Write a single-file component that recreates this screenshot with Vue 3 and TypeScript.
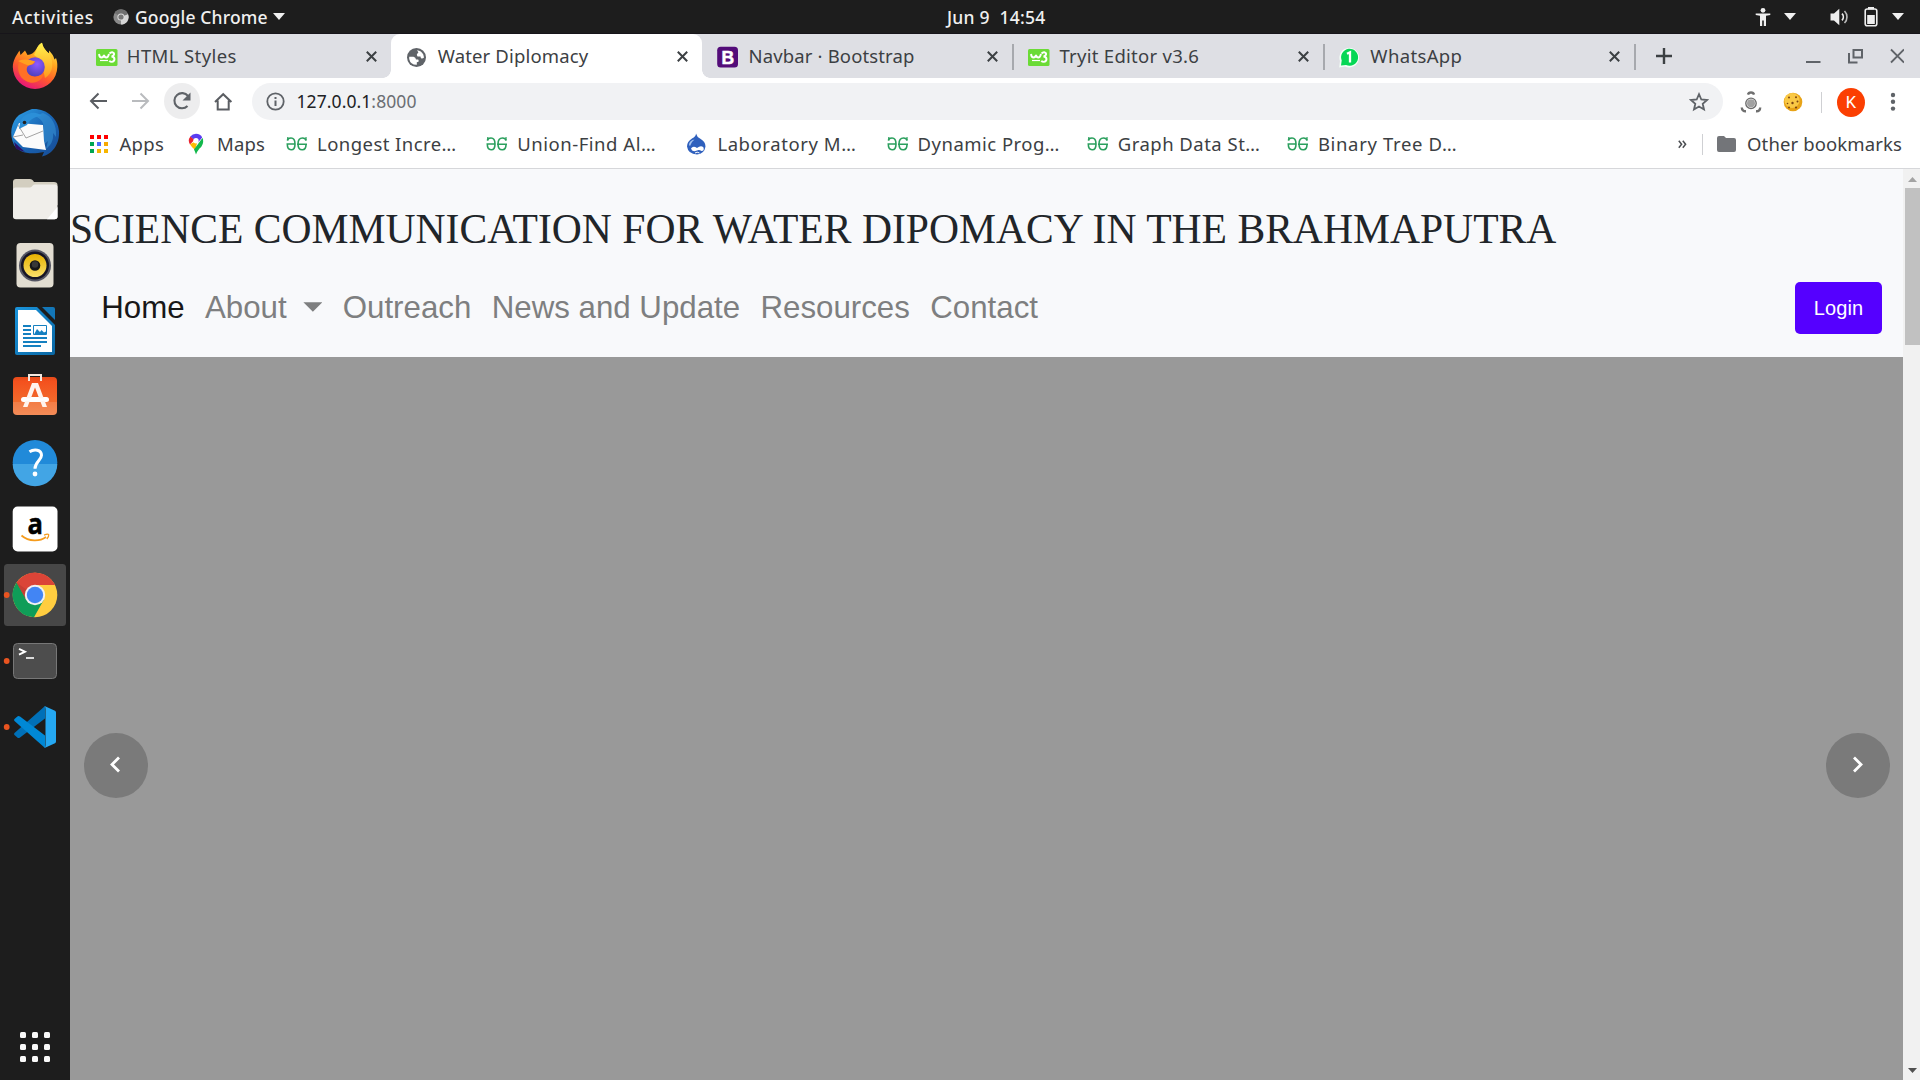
<script setup lang="ts">
interface Tab {
  title: string
  icon: 'w3' | 'globe' | 'bootstrap' | 'whatsapp'
  tracking: number
  active?: boolean
  divider?: boolean
}

interface Bookmark {
  label: string
  icon: 'gfg' | 'drupal'
  tracking: number
}

const tabs: Tab[] = [
  { title: 'HTML Styles', icon: 'w3', tracking: 0.4 },
  { title: 'Water Diplomacy', icon: 'globe', tracking: 0.15, active: true },
  { title: 'Navbar · Bootstrap', icon: 'bootstrap', tracking: 0.14, divider: true },
  { title: 'Tryit Editor v3.6', icon: 'w3', tracking: 0.28, divider: true },
  { title: 'WhatsApp', icon: 'whatsapp', tracking: 0.35, divider: true },
]

const bookmarks: Bookmark[] = [
  { label: 'Longest Incre…', icon: 'gfg', tracking: 0.45 },
  { label: 'Union-Find Al…', icon: 'gfg', tracking: 0.53 },
  { label: 'Laboratory M…', icon: 'drupal', tracking: 0.58 },
  { label: 'Dynamic Prog…', icon: 'gfg', tracking: 0.48 },
  { label: 'Graph Data St…', icon: 'gfg', tracking: 0.48 },
  { label: 'Binary Tree D…', icon: 'gfg', tracking: 0.65 },
]

const appColors: string[] = [
  '#f00', '#f00', '#f00',
  '#00a651', '#4b6bfb', '#f7a800',
  '#00a651', '#f7b500', '#f7b500',
]
</script>

<template>
  <div class="desktop">
    <header class="topbar">
      <span class="activities">Activities</span>
      <svg class="mini-chrome" width="16" height="16" viewBox="0 0 16 16">
        <circle cx="8" cy="8" r="7.6" fill="#8a8a8a" />
        <path d="M8 8 15 5A7.6 7.6 0 0 1 8 15.6z" fill="#d6d6d6" />
        <path d="M8 8 1.5 4A7.6 7.6 0 0 1 15 5z" fill="#707070" />
        <circle cx="8" cy="8" r="3.6" fill="#ddd" />
        <circle cx="8" cy="8" r="2.6" fill="#777" />
      </svg>
      <span class="app-name">Google Chrome</span>
      <i class="tri app-tri"></i>
      <span class="clock">Jun 9&nbsp; 14:54</span>
      <div class="status">
        <svg width="16" height="20" viewBox="0 0 16 20" fill="#f0f0f0">
          <circle cx="8" cy="3.3" r="2.4" />
          <path d="M.7 6.5h14.6v1.6l-4.3.7V19H8.8v-5.6H7.2V19H5V8.800L.7 8.100z" />
        </svg>
        <i class="tri t1"></i>
        <svg class="vol" width="20" height="18" viewBox="0 0 20 18">
          <path d="M.5 5.500H4L9.300.8v16.400L4 12.500H.5z" fill="#f0f0f0" />
          <path d="M12 5.700a4.800 4.800 0 0 1 0 6.600" fill="none" stroke="#eee" stroke-width="1.700" />
          <path d="M14.500 3a8.500 8.500 0 0 1 0 12" fill="none" stroke="#bbb" stroke-width="1.600" />
        </svg>
        <svg class="bat" width="14" height="20" viewBox="0 0 14 20">
          <rect x="4" y="0" width="6" height="2.500" fill="#eee" />
          <rect x="1.200" y="2" width="11.600" height="16.800" rx="2" fill="none" stroke="#eee" stroke-width="1.600" />
          <rect x="3.200" y="8" width="7.600" height="9" fill="#eee" />
        </svg>
        <i class="tri t2"></i>
      </div>
    </header>

    <div class="workspace">
      <aside class="dock">
        <!-- Firefox -->
        <svg class="slot" viewBox="0 0 70 66">
          <defs>
            <linearGradient id="ffx" x1=".8" y1="0" x2=".3" y2="1">
              <stop offset="0" stop-color="#fff44f" />
              <stop offset=".35" stop-color="#ffa41f" />
              <stop offset=".65" stop-color="#ff5b2c" />
              <stop offset="1" stop-color="#e5117e" />
            </linearGradient>
            <linearGradient id="ffy" x1=".5" y1="0" x2=".5" y2="1">
              <stop offset="0" stop-color="#fff34d" />
              <stop offset="1" stop-color="#ff9a1d" />
            </linearGradient>
            <radialGradient id="ffp" cx=".6" cy=".35" r=".7">
              <stop offset="0" stop-color="#9059ff" />
              <stop offset="1" stop-color="#4a3fb8" />
            </radialGradient>
          </defs>
          <path d="M35 56A22.300 22.300 0 0 1 12.800 34C13 27 16 23 19.500 17.500L20.500 22 25 17.500 27.500 22C31 21.500 34 20 36 16.500 38 13 39 11.500 42 9.800 43 15 46 18 49 20.500V17.500C52.500 21 53.500 23 54.500 26.500L56 25C57 28 57.500 30 57.300 34A22.300 22.300 0 0 1 35 56z" fill="url(#ffx)" />
          <path d="M36 18C38 13 39 11.500 42 9.800 43 15 46 18 49 20.500 54 28 54 40 45 45L41 27 34 22z" fill="url(#ffy)" />
          <circle cx="35" cy="34" r="9.800" fill="url(#ffp)" />
          <path d="M19 29C24 27 29 28 35 28.500 34 31.500 31 32 28.500 32.500 25.500 35 26.500 40 30.500 42.500 35 45 40 43 44 40 42 49 33 52 26 48 18 44 17 35 19 29z" fill="#ff7026" />
          <path d="M18 28Q26 25 35 28.500 33 31.500 28.500 32.500 24 31 18 28z" fill="#ffa01f" />
        </svg>
        <!-- Thunderbird -->
        <svg class="slot" viewBox="0 0 70 66">
          <defs>
            <linearGradient id="tb" x1="0" y1="0" x2="1" y2="1">
              <stop offset="0" stop-color="#2fa3e8" />
              <stop offset=".5" stop-color="#1965b5" />
              <stop offset="1" stop-color="#174a92" />
            </linearGradient>
          </defs>
          <path d="M14 46C9 35 11 23 19 16L27 12 32 10C46 9 58 19 59 32 60 46 51 56 42 57.500L44 53C30 56 19 54 14 46z" fill="url(#tb)" />
          <path d="M14 43 25 53 16 50z" fill="#2c0f65" />
          <path d="M43 14C52 17 57 26 56 38L53 34C54 42 50 47 46 50L48 42C45 45 42 47 38 48L43 32C45 25 42 20 35 17z" fill="#3c9bdc" opacity=".5" />
          <path d="M19 24 43 26 44 42 46 51 23 48 13 38z" fill="#fbfbfb" />
          <path d="M18 26 26 39 43 32M13 38 23 36" fill="none" stroke="#999" stroke-width=".9" />
          <path d="M23 18C30 12 38 13 42 17 36 17 30 20 27 26L19 30C20 25 20 22 23 18z" fill="#2b8fd8" />
          <circle cx="24.500" cy="23.500" r="1.800" fill="#222" />
        </svg>
        <!-- Files -->
        <svg class="slot" viewBox="0 0 70 66">
          <path d="M13 17q0-3 3-3h14q2 0 3 1.500l1 1.500h20q3.500 0 3.500 3v20H13z" fill="#d3cec0" />
          <path d="M13 25q0-2.500 2.500-2.500H30q1.500 0 2.500-1.700 1-1.300 2.500-1.300H55q2.500 0 2.500 2.500V51.500q0 2.700-3 2.700H16q-3 0-3-2.700z" fill="#f0eeea" />
          <path d="M57.500 42v9.500q0 2.700-3 2.700H47z" fill="#fff" />
        </svg>
        <!-- Rhythmbox -->
        <svg class="slot" viewBox="0 0 70 66">
          <defs>
            <linearGradient id="rb" x1="0" y1="0" x2="0" y2="1">
              <stop offset="0" stop-color="#e6b000" />
              <stop offset="1" stop-color="#fbe06a" />
            </linearGradient>
          </defs>
          <rect x="16.500" y="12" width="37" height="44.500" rx="4" fill="#e2ddd1" />
          <circle cx="35" cy="34.500" r="16" fill="#555663" />
          <circle cx="35" cy="34.500" r="14" fill="#171525" />
          <circle cx="35" cy="34.500" r="11.500" fill="url(#rb)" />
          <circle cx="35" cy="34.500" r="5.300" fill="#171717" />
          <circle cx="35" cy="33.500" r="3.200" fill="#383838" />
        </svg>
        <!-- Writer -->
        <svg class="slot" viewBox="0 0 70 66">
          <defs>
            <linearGradient id="wr" x1="0" y1="0" x2="1" y2="1">
              <stop offset="0" stop-color="#1a94dc" />
              <stop offset="1" stop-color="#0a67a3" />
            </linearGradient>
          </defs>
          <path d="M15 12q0-2 2-2H37L55 28V56q0 2-2 2H17q-2 0-2-2z" fill="url(#wr)" />
          <path d="M18 13H36L52 29V55H18z" fill="#fff" />
          <path d="M42 10H53q2 0 2 2V23z" fill="#1377b8" />
          <path d="M23 29h8M23 33h8M23 37h8M23 41h24M23 45h24M23 49h18" stroke="#1580c0" stroke-width="2" />
          <path d="M33.500 28.500h13v9h-13z" fill="#fff" stroke="#1580c0" />
          <path d="M34 37.500 37 32l3 3 1.500-2 2.500 2.500 2-1v3z" fill="#1580c0" />
        </svg>
        <!-- Software -->
        <svg class="slot" viewBox="0 0 70 66">
          <defs>
            <linearGradient id="sw" x1="0" y1="0" x2="0" y2="1">
              <stop offset="0" stop-color="#e64a19" />
              <stop offset=".12" stop-color="#f4511e" />
              <stop offset=".65" stop-color="#f26a2c" />
              <stop offset=".66" stop-color="#f37d46" />
              <stop offset="1" stop-color="#f38c58" />
            </linearGradient>
          </defs>
          <rect x="13" y="14" width="44" height="38" rx="4" fill="url(#sw)" />
          <path d="M29 18V12H41V18" fill="none" stroke="#f6e9df" stroke-width="2" />
          <path d="M23.500 36.500H46.500" stroke="#fff" stroke-width="5" stroke-linecap="round" />
          <path d="M32 20H38L47 44H42.500L35 24.500 27.500 44H23z" fill="#fff4ee" />
          <path d="M24 36.500H46" stroke="#fff" stroke-width="2.500" />
        </svg>
        <!-- Help -->
        <svg class="slot" viewBox="0 0 70 66">
          <circle cx="35" cy="33.300" r="22.300" fill="#218ad9" />
          <path d="M12.700 35H57.300A22.300 22.300 0 0 1 12.700 35z" fill="#42a5e5" />
          <path d="M29.500 22.800C34 19.800 41.500 20.300 41.500 26.300 41.500 31.300 35 32.800 35 39.800" fill="none" stroke="#fff" stroke-width="3" />
          <circle cx="35" cy="45" r="2.400" fill="#fff" />
        </svg>
        <!-- Amazon -->
        <svg class="slot" viewBox="0 0 70 66">
          <rect x="12.700" y="11.500" width="44.800" height="45" rx="5" fill="#fff" />
          <text x="35.300" y="39.300" text-anchor="middle" font-family="Open Sans, Noto Sans, sans-serif" font-weight="700" font-size="29" textLength="15.500" lengthAdjust="spacingAndGlyphs" stroke="#000" stroke-width=".5">a</text>
          <path d="M21.500 40.500C29 47 40 46.500 46 42" fill="none" stroke="#f59b1c" stroke-width="1.800" />
          <path d="M44 40.200Q48 38.500 48.700 39.800 49 41.500 46.800 44" fill="none" stroke="#f59b1c" stroke-width="1.300" />
        </svg>
        <!-- Chrome -->
        <svg class="slot" viewBox="0 0 70 66">
          <rect x="4" y="3" width="62" height="62" rx="3.500" fill="#474747" />
          <circle cx="35" cy="34" r="22.300" fill="#ffcd40" />
          <path d="M35 34 16.500 21.500A22.300 22.300 0 0 0 34 56.300L43.700 39z" fill="#0f9d58" />
          <path d="M35 24H55A22.300 22.300 0 0 0 16.500 21.500L26.300 39z" fill="#db4437" />
          <path d="M16.500 21.500 26 38 27 29z" fill="#b83a30" opacity=".6" />
          <circle cx="35" cy="34" r="10.200" fill="#f1f1f1" />
          <circle cx="35" cy="34" r="8.200" fill="#4285f4" />
          <circle cx="6.700" cy="34" r="2.900" fill="#e95420" />
        </svg>
        <!-- Terminal -->
        <svg class="slot" viewBox="0 0 70 66">
          <rect x="13.500" y="16.500" width="43" height="35" rx="4" fill="#4d4d4d" stroke="#777" />
          <path d="M19 21.800 25 24.700 19 27.600" fill="none" stroke="#fff" stroke-width="1.900" />
          <path d="M26 31h8" stroke="#fff" stroke-width="1.600" />
          <circle cx="6.700" cy="34" r="2.900" fill="#e95420" />
        </svg>
        <!-- VS Code -->
        <svg class="slot" viewBox="0 0 70 66">
          <path d="M45 13V25.500L20 44.500Q18.500 45.500 17.300 44.500L14.500 42Q13.500 41 14.500 40z" fill="#0070b8" />
          <path d="M45 55V42.500L20 23.500Q18.500 22.500 17.300 23.500L14.500 26Q13.500 27 14.500 28z" fill="#0088d6" />
          <path d="M44.500 13 55 17.700Q56 18.300 56 19.500V48.500Q56 49.700 55 50.300L44.500 55Q45.500 54 45.500 52V16Q45.500 14 44.500 13z" fill="#25a8f2" />
          <circle cx="6.700" cy="34" r="2.900" fill="#e95420" />
        </svg>
        <div class="launcher"><i v-for="n in 9" :key="n"></i></div>
      </aside>

      <main class="browser">
        <div class="tabstrip">
          <div class="lead"></div>
          <div v-for="(tab, i) in tabs" :key="i" class="tab" :class="{ active: tab.active, divided: tab.divider }">
            <svg v-if="tab.icon === 'w3'" class="fav" viewBox="0 0 22 22">
              <rect y="3" width="21.500" height="17" rx="1.500" fill="#6bdb36" />
              <path d="M3 8q.5 3.500 2.500 3.500T8 9q.5 2.500 2.300 2.500T13 8" fill="none" stroke="#fff" stroke-width="1.900" />
              <path d="M13.500 7.500q1.500-1.500 3-1.200 2 .6 1.500 2.400-.6 1.600-2.500 1.800 3 .3 3 2.700-.2 2.500-2.700 2.700-1.600 0-2.500-1.200" fill="none" stroke="#fff" stroke-width="1.900" />
              <path d="M4 14.500h8" stroke="#fff" stroke-width="1.200" />
            </svg>
            <svg v-else-if="tab.icon === 'globe'" class="fav" viewBox="0 0 22 22">
              <circle cx="10.500" cy="11.500" r="9.500" fill="#5f6368" />
              <path d="M11 4.200Q15.500 4.800 17.300 8.500L18 11.500Q17 12.700 15.500 12.500 14.500 12 14.500 10.500H11.500Q10.500 9 11 7.800 12.300 7.500 12.300 6.300z" fill="#fff" />
              <path d="M3.200 10.800H7.500Q9.800 11.500 10 13.500H12.200Q13 14.500 12.500 15.800L10.800 16.300V18.800Q4.500 19 3.200 13z" fill="#fff" />
            </svg>
            <svg v-else-if="tab.icon === 'bootstrap'" class="fav" viewBox="0 0 22 22">
              <rect x=".2" y=".8" width="20.800" height="20.800" rx="3.500" fill="#530c79" />
              <text x="10.700" y="17.500" text-anchor="middle" font-family="Liberation Sans, sans-serif" font-weight="700" font-size="17.500" fill="#fff" stroke="#fff" stroke-width=".5">B</text>
            </svg>
            <svg v-else class="fav" viewBox="0 0 22 22">
              <path d="M.2 21.500 1 15A9.800 9.800 0 1 1 6 20.500z" fill="#f4fff7" />
              <path d="M2 19.500 2.700 14.500A8.500 8.500 0 1 1 7 19z" fill="#06d755" />
              <path d="M8 7.800 11 6.300V16.500" fill="none" stroke="#fff" stroke-width="2.300" />
            </svg>
            <span class="tab-title" :style="{ letterSpacing: tab.tracking + 'px' }">{{ tab.title }}</span>
            <svg class="close" width="11" height="11" viewBox="0 0 11 11"><path d="M.8.8 10.200 10.200M10.200.8.8 10.200" stroke="#3c4043" stroke-width="2" /></svg>
          </div>
          <svg class="plus" width="16" height="16" viewBox="0 0 16 16"><path d="M8 0V16M0 8H16" stroke="#3c4043" stroke-width="2.400" /></svg>
          <div class="winbtns">
            <svg width="98" height="16" viewBox="0 0 98 16" fill="none" stroke="#5f6368" stroke-width="2">
              <path d="M0 14H14.500" />
              <path d="M47.500 2H56V9.500H47.500z" />
              <path d="M43 5V14.500H51.500" />
              <path d="M85 1.500 98 14.500M98 1.500 85 14.500" stroke-width="1.800" />
            </svg>
          </div>
        </div>

        <div class="toolbar">
          <svg class="nav-btn" viewBox="0 0 36 36" fill="none" stroke="#5a5d62" stroke-width="2"><path d="M27 18H11.500M18.500 10.500 11 18 18.500 25.500" /></svg>
          <svg class="nav-btn fwd" viewBox="0 0 36 36" fill="none" stroke="#b9bbbe" stroke-width="2"><path d="M10 18H25.500M18.500 10.500 26 18 18.500 25.500" /></svg>
          <svg class="nav-btn reload" viewBox="0 0 36 36">
            <path d="M23.500 23A7.600 7.600 0 1 1 24 13" fill="none" stroke="#5f6368" stroke-width="2.100" />
            <path d="M26.500 9.500V17.500H18.500z" fill="#5f6368" />
          </svg>
          <svg class="nav-btn home" viewBox="0 0 36 36" fill="none" stroke="#5a5d62" stroke-width="2"><path d="M9 19 17.200 11.200 25.400 19M11.700 17.500V26.500H22.700V17.500" /></svg>
          <div class="omnibox">
            <svg width="19" height="19" viewBox="0 0 19 19">
              <circle cx="9.500" cy="9.500" r="8.200" fill="none" stroke="#5f6368" stroke-width="1.800" />
              <path d="M9.500 8.500V14M9.500 5V7" stroke="#5f6368" stroke-width="2" />
            </svg>
            <span class="url">127.0.0.1<em>:8000</em></span>
            <svg class="star" width="20" height="20" viewBox="0 0 20 20"><path d="M10 2.200 12.300 7.500 18 8 13.700 11.800 15 17.500 10 14.500 5 17.500 6.300 11.800 2 8 7.700 7.500z" fill="none" stroke="#5f6368" stroke-width="1.800" /></svg>
          </div>
          <svg class="ext" width="22" height="22" viewBox="0 0 22 22">
            <circle cx="11" cy="12.300" r="5.200" fill="none" stroke="#6c6c6c" stroke-width="1.400" />
            <circle cx="11" cy="12.300" r="4" fill="#a2a2a2" />
            <path d="M8 3.600Q8.500 1.500 11 1.500T14 3.600M1.800 16.500Q2 20.500 6 20.300M20.200 16.500Q20 20.500 16 20.300" fill="none" stroke="#6f6f6f" stroke-width="2.400" />
          </svg>
          <svg class="cookie" width="20" height="20" viewBox="0 0 20 20">
            <circle cx="10" cy="10" r="9.300" fill="#e8a317" />
            <circle cx="9" cy="8.500" r="7.600" fill="#f9c845" />
            <g fill="#7c4510"><circle cx="6" cy="5.500" r="1" /><circle cx="13" cy="5.300" r="1" /><circle cx="9.500" cy="11" r="1.200" /><circle cx="14.500" cy="9.500" r="1" /><circle cx="4.500" cy="11.500" r=".8" /><circle cx="6" cy="15.500" r="1" /><circle cx="13" cy="15.500" r="1.100" /></g>
          </svg>
          <i class="vline"></i>
          <span class="avatar">K</span>
          <svg class="dots" width="6" height="20" viewBox="0 0 6 20" fill="#5f6368"><circle cx="3" cy="3" r="2.200" /><circle cx="3" cy="9.800" r="2.200" /><circle cx="3" cy="16.600" r="2.200" /></svg>
        </div>

        <div class="bookmarks">
          <div class="bm apps">
            <div class="appgrid"><i v-for="(c, i) in appColors" :key="i" :style="{ background: c }"></i></div>
            <span>Apps</span>
          </div>
          <div class="bm maps">
            <svg width="16" height="22" viewBox="0 0 16 22">
              <path d="M2.500 3.300Q-.7 7.500 2 11.500L6.500 6.700z" fill="#ea2330" />
              <path d="M8 .8Q12.500.8 14.200 4.500L10 9.500 2.300 3.500Q4.500.8 8 .8z" fill="#5a3df2" />
              <path d="M2 11.200 10 7 7 17Q3.500 14 2 11.200z" fill="#fbbc04" />
              <path d="M15 6Q16 12 11.500 15.500 9 18.500 8 21.500 7 18.500 6 16.500L14.400 5z" fill="#12b84b" />
              <circle cx="8" cy="7.800" r="2.700" fill="#fff" />
            </svg>
            <span>Maps</span>
          </div>
          <div v-for="b in bookmarks" :key="b.label" class="bm wide">
            <svg v-if="b.icon === 'gfg'" width="22" height="20" viewBox="0 0 22 20" fill="none" stroke="#2a9f5d" stroke-width="1.600">
              <path d="M1.500 6.500Q1.500 4 5 4 9 4 9 10T5 15.700Q1.300 15.700 1.300 10H9.500" />
              <path d="M1.800 3V6.500M20 3V6.500" stroke-width="1.200" />
              <path d="M20 6.500Q19.500 4 16.500 4 12 4 12 10T16.500 15.700Q20 15.700 20 10.500M11 10.200H21" />
            </svg>
            <svg v-else width="22" height="22" viewBox="0 0 22 22">
              <path d="M10 .5Q11 4 14 5.500 19.500 8.500 19.500 13.500 18.500 20.700 11 21.500 2 21 1 13.500 1 8.500 6 5.500 10 3.500 10 .5z" fill="#2f60bd" />
              <path d="M3 12Q3 7.500 8.500 6.500 5 9 4 13z" fill="#a5c3ef" />
              <path d="M5 15.500Q7 12.500 11 15 15 12 17.500 14.500 18.500 18 15.500 18 13 16.500 11 17.500 6 19.500 5 15.500z" fill="#fff" />
              <path d="M9 20Q11 18.300 13.500 20" stroke="#fff" fill="none" />
            </svg>
            <span :style="{ letterSpacing: b.tracking + 'px' }">{{ b.label }}</span>
          </div>
          <div class="bm-right">
            <svg class="chev" width="9" height="9" viewBox="0 0 9 9" fill="none" stroke="#4a4d51" stroke-width="1.500"><path d="M.8.7 3.600 4.200.8 7.800M4.800.7 7.600 4.200 4.800 7.800" /></svg>
            <i class="vline"></i>
            <svg class="folder" width="19" height="16" viewBox="0 0 19 16"><path d="M0 2Q0 0 2 0H7L9 2H17Q19 2 19 4V14Q19 16 17 16H2Q0 16 0 14z" fill="#737579" /></svg>
            <span>Other bookmarks</span>
          </div>
        </div>

        <div class="viewport">
          <div class="page">
            <div class="site-head">
              <h1>SCIENCE COMMUNICATION FOR WATER DIPOMACY IN THE BRAHMAPUTRA</h1>
              <nav>
                <a class="current">Home</a>
                <a>About&nbsp;<i class="caret"></i></a>
                <a>Outreach</a>
                <a>News and Update</a>
                <a>Resources</a>
                <a>Contact</a>
                <button>Login</button>
              </nav>
            </div>
            <div class="carousel">
              <span class="arrow"><svg width="64" height="64" viewBox="0 0 64 64"><path d="M35 24.500 28 31.500 35 38.500" fill="none" stroke="#fff" stroke-width="2.800" /></svg></span>
              <span class="arrow"><svg width="64" height="64" viewBox="0 0 64 64"><path d="M28 24.500 35 31.500 28 38.500" fill="none" stroke="#fff" stroke-width="2.800" /></svg></span>
            </div>
          </div>
          <div class="scrollbar">
            <i class="up"></i>
            <div class="thumb"></div>
            <i class="down"></i>
          </div>
        </div>
      </main>
    </div>
  </div>
</template>

<style>
body { margin: 0; overflow: hidden; }
</style>

<style scoped>
* { box-sizing: border-box; }
svg { display: block; flex: none; }
i { display: block; flex: none; }
.desktop { width: 1920px; height: 1080px; overflow: hidden; display: flex; flex-direction: column; background: #1d1d1d; font-family: "Noto Sans", "Open Sans", sans-serif; white-space: nowrap; }
.topbar { height: 34px; flex: none; display: flex; align-items: center; padding-left: 12px; color: #f0f0f0; font-size: 17.500px; font-weight: 500; border-bottom: 1px solid #17151a; }
.activities { width: 101px; letter-spacing: .65px; }
.mini-chrome { margin-right: 6px; }
.app-name { width: 138px; letter-spacing: .15px; }
.tri { border: 6px solid transparent; border-top: 7px solid #f0f0f0; border-bottom: 0; }
.clock { margin-left: 662px; letter-spacing: .25px; }
.status { margin-left: auto; display: flex; align-items: center; padding-right: 16px; }
.t1 { margin-left: 13px; }
.vol { margin-left: 34px; }
.bat { margin-left: 14px; }
.t2 { margin-left: 14px; }
.workspace { flex: 1; display: flex; min-height: 0; }
.dock { width: 70px; flex: none; display: flex; flex-direction: column; margin-top: -1px; }
.slot { width: 70px; height: 66px; }
.launcher { margin: auto 20px 18px; display: grid; grid-template-columns: repeat(3, 6px); gap: 6px; }
.launcher i { width: 6px; height: 6px; border-radius: 1.500px; background: #fafafa; }
.browser { flex: 1; min-width: 0; display: flex; flex-direction: column; background: #fff; }

.tabstrip { height: 44px; flex: none; display: flex; background: #dedfe4; }
.lead { width: 10.300px; flex: none; }
.tab { width: 310.900px; flex: none; display: flex; align-items: center; padding: 1px 14.500px 0 15.300px; color: #3c4043; font-size: 18.500px; position: relative; }
.tab.active { background: #fff; border-radius: 9px 9px 0 0; }
.tab.active::before, .tab.active::after { content: ""; position: absolute; bottom: 0; width: 8px; height: 8px; }
.tab.active::before { left: -8px; background: radial-gradient(circle at 0 0, transparent 7.500px, #fff 8px); }
.tab.active::after { right: -8px; background: radial-gradient(circle at 100% 0, transparent 7.500px, #fff 8px); }
.tab.divided::after { content: ""; position: absolute; right: -1px; top: 10px; width: 2px; height: 26px; background: #a7a9ae; }
.fav { width: 22px; height: 22px; margin-right: 9.200px; }
.tab-title { flex: 1; position: relative; top: -1px; }
.plus { margin: 14px 0 0 21px; }
.winbtns { margin: 14px 16px 0 auto; }

.toolbar { height: 48px; flex: none; display: flex; align-items: center; padding-left: 10px; }
.nav-btn { width: 36px; height: 36px; margin-right: 6px; margin-top: -2px; }
.reload { background: #ededee; border-radius: 50%; }
.home { margin-right: 10px; }
.omnibox { width: 1471px; height: 37px; margin-top: -1px; border-radius: 19px; background: #f1f2f4; display: flex; align-items: center; padding: 0 14px; }
.url { margin-left: 11.500px; font-size: 17.500px; color: #202124; position: relative; top: -1px; letter-spacing: .08px; }
.url em { font-style: normal; color: #6b6e73; }
.star { margin-left: auto; }
.ext { margin-left: 17px; }
.cookie { margin-left: 21px; }
.vline { width: 1px; height: 21px; background: #cfd0d3; }
.toolbar .vline { margin-left: 18px; }
.avatar { width: 28px; height: 29px; margin-left: 15px; border-radius: 50%; background: #fb3f02; color: #fff; display: flex; align-items: center; justify-content: center; font: 16.500px Roboto, sans-serif; }
.dots { margin-left: 24.500px; }

.bookmarks { height: 43px; flex: none; display: flex; align-items: center; padding: 0 18px 6px 20px; border-bottom: 1px solid #d6d7da; color: #3c4043; font-size: 18.500px; letter-spacing: .12px; }
.bm { display: flex; align-items: center; }
.bm span, .bm-right span { position: relative; top: -1px; }
.apps { width: 98px; letter-spacing: .3px; }
.appgrid { display: grid; grid-template-columns: repeat(3, 4px); gap: 3px; width: 29.500px; }
.appgrid i { width: 4px; height: 4px; }
.maps { width: 98px; }
.maps svg { margin-right: 13px; }
.wide { width: 200.200px; }
.wide svg { margin-right: 9px; }
.bm-right { margin-left: auto; display: flex; align-items: center; }
.bm-right .vline { margin-left: 15px; }
.folder { margin: 0 11.500px 0 14px; }

.viewport { flex: 1; min-height: 0; display: flex; }
.page { flex: 1; display: flex; flex-direction: column; }
.site-head { height: 188px; flex: none; background: #f8f9fb; }
h1 { margin: 0; padding-top: 35px; height: 98px; font: 400 41.600px/50px "Liberation Serif", serif; color: #212529; }
nav { display: flex; align-items: center; height: 82px; padding: 0 21px 0 21.250px; font: 31.250px "Liberation Sans", sans-serif; }
nav a { color: #7e7f80; padding: 0 10.400px 0 10px; display: flex; align-items: center; }
nav a.current { color: #181818; }
.caret { margin-left: 8px; width: 19px; height: 9.500px; background: #7e7f80; clip-path: polygon(0 0, 100% 0, 50% 100%); position: relative; top: -1px; }
nav button { margin-left: auto; width: 87px; height: 52px; border: 0; border-radius: 5px; background: #50f; color: #fff; font: 20px "Liberation Sans", sans-serif; letter-spacing: .15px; padding: 0; }
.carousel { flex: 1; background: #999; display: flex; justify-content: space-between; padding: 376px 12.800px 0 13.500px; }
.arrow { width: 64.500px; height: 65px; border-radius: 50%; background: #7a7a7a; }
.scrollbar { width: 17px; background: #f1f1f1; display: flex; flex-direction: column; }
.up { margin: 8px 3px 6px 5px; width: 9px; height: 5px; background: #a3a3a3; clip-path: polygon(50% 0, 100% 100%, 0 100%); }
.thumb { height: 157px; margin-left: 2px; background: #c1c1c1; }
.down { margin: auto 3px 7px 5px; width: 9px; height: 5px; background: #505050; clip-path: polygon(0 0, 100% 0, 50% 100%); }
</style>
